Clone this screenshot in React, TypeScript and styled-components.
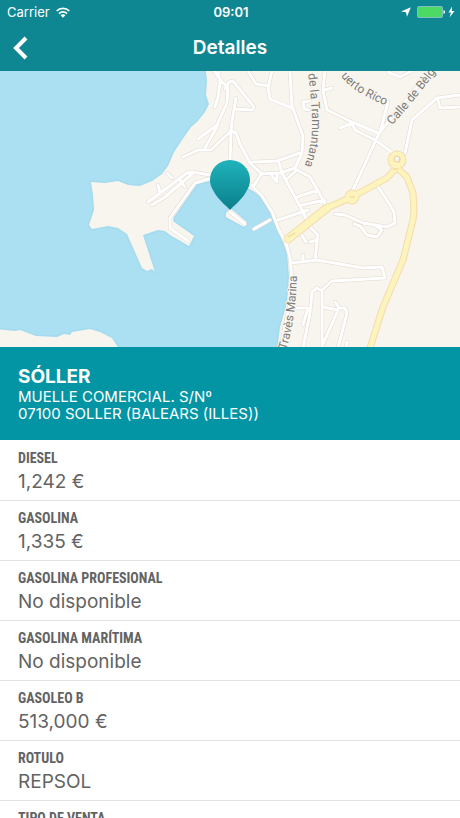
import React from 'react';
import styled, { createGlobalStyle } from 'styled-components';

const GlobalStyle = createGlobalStyle`
  *, *::before, *::after { box-sizing: border-box; }
  body { margin: 0; background: #fff; font-family: Inter, "Liberation Sans", sans-serif; }
`;

const Screen = styled.main`
  height: 100vh;
  overflow: hidden;
  display: flex;
  flex-direction: column;
`;

const Header = styled.header`
  flex: none;
  background: #0f8793;
  color: #fff;
`;

const StatusBar = styled.div`
  display: grid;
  grid-template-columns: 1fr auto 1fr;
  align-items: center;
  height: 24px;
  padding: 0 5px 0 7px;
  font-size: 13px;
`;

const StatusGroup = styled.div<{ $end?: boolean }>`
  display: flex;
  align-items: center;
  gap: 6px;
  justify-content: ${(p) => (p.$end ? 'flex-end' : 'flex-start')};
`;

const Clock = styled.time`
  font-weight: 600;
`;

const NavBar = styled.div`
  display: grid;
  grid-template-columns: 56px 1fr 56px;
  align-items: center;
  height: 47px;
`;

const BackButton = styled.button`
  display: flex;
  align-items: center;
  height: 44px;
  padding: 0 0 0 12px;
  border: 0;
  background: none;
  color: inherit;
  cursor: pointer;
`;

const Title = styled.h1`
  margin: 0;
  text-align: center;
  font-size: 19px;
  font-weight: 600;
`;

const MapView = styled.svg`
  flex: none;
  display: block;
  width: 100%;
  height: 276px;
  background: #abe0f3;
`;

const Roads = styled.g<{ $color: string; $width: number }>`
  fill: none;
  stroke: ${(p) => p.$color};
  stroke-width: ${(p) => p.$width}px;
  stroke-linecap: round;
  stroke-linejoin: round;
`;

const StreetName = styled.text`
  font-family: Roboto, "Liberation Sans", sans-serif;
  font-size: 12px;
  fill: #7d7b79;
  stroke: #f9f6f0;
  stroke-width: 2px;
  paint-order: stroke;
`;

const Station = styled.section`
  flex: none;
  padding: 19px 18px 18px;
  background: #0395a4;
  color: #fff;
`;

const StationName = styled.h2`
  margin: 0;
  font-size: 19px;
  line-height: 22px;
  font-weight: 700;
`;

const Address = styled.address`
  font-size: 15px;
  line-height: 17px;
  font-weight: 400;
  font-style: normal;
`;

const Details = styled.dl`
  flex: 1;
  min-height: 0;
  overflow-y: auto;
  scrollbar-width: none;
  margin: 0;
  padding-top: 1px;
`;

const Row = styled.div`
  display: flex;
  flex-direction: column;
  gap: 2px;
  padding: 8px 18px 6px;
  border-bottom: 1px solid #e2e2e2;
  color: #636363;
`;

const Label = styled.dt`
  font-family: "Roboto Condensed", Roboto, sans-serif;
  font-size: 14px;
  line-height: 18px;
  font-weight: 700;
`;

const Value = styled.dd`
  margin: 0;
  font-size: 19px;
  line-height: 25px;
`;

const streets = [
  'M218 71 220 83 218 97 215 107',
  'M214 71 222 82 228 87 227 103 217 125 198 139',
  'M218 125 205 148',
  'M183 157 198 150 211 150 231 131',
  'M225 89 229 82 233 81 254 107 252 110 235 109',
  'M236 98 232 121 231 131 230 162',
  'M231 131 236 133 240 144 250 163 262 174 280 173 295 168 302 153 303 136 292 106 290 71',
  'M272 71 268 88 270 99 292 108',
  'M248 71 256 84 269 86',
  'M252 162 277 161 300 153',
  'M278 160 282 173 302 210 310 227 318 235 317 242 315 260',
  'M297 170 310 177 327 207',
  'M297 197 318 190 M288 178 297 170 M302 205 325 200',
  'M262 173 253 187 M272 176 277 182 277 175',
  'M325 71 323 90 327 110 352 122 378 133 M325 90 332 88',
  'M340 128 352 123 355 130 375 140 393 153',
  'M388 102 380 132 375 142 353 190',
  'M380 132 430 71',
  'M405 153 412 120 437 98 460 95 M438 100 440 108 460 107',
  'M388 72 400 77 412 71',
  'M310 101 303 102 304 109 309 110',
  'M377 185 390 205 394 212 395 223 387 227 363 223 345 215 335 214',
  'M354 224 360 226 367 235 377 237 382 230 376 226',
  'M210 175 192 172 187 173 148 202',
  'M152 205 165 197 192 174 M167 173 172 178 M158 185 160 192 M180 180 185 187',
  'M188 241 170 228 170 218 195 183 208 179 230 178 250 184 262 196 272 212 279 230 286 243 290 258 292 280 291 300 285 325 281 348',
  'M278 220 308 210 M254 229 270 220 M230 212 245 224',
  'M291 263 317 260 363 268 382 267 385 278 332 281 322 290 322 348',
  'M322 291 317 288 312 292 310 313 303 348',
  'M310 242 317 240 M302 235 306 242 M303 255 303 262',
  'M297 308 308 308 303 325',
  'M323 307 338 310 323 344 M335 302 339 308 345 308 347 313 338 348 M347 342 346 348',
].join(' ');

const avenue = 'M396 168 387 178 352 197 327 208 288 239';
const mainRoad = 'M396 162 397 168 407 177 413 193 414 210 413 220 403 260 383 307 370 348';

const rows = [
  ['DIESEL', '1,242 €'],
  ['GASOLINA', '1,335 €'],
  ['GASOLINA PROFESIONAL', 'No disponible'],
  ['GASOLINA MARÍTIMA', 'No disponible'],
  ['GASOLEO B', '513,000 €'],
  ['ROTULO', 'REPSOL'],
  ['TIPO DE VENTA', 'Público'],
];

function WifiIcon() {
  return (
    <svg width="14" height="11" viewBox="0 0 14 11" fill="none" stroke="#fff" strokeWidth="1.7" aria-hidden="true">
      <path d="M.7 4a8.9 8.9 0 0 1 12.6 0M3 6.6a5.7 5.7 0 0 1 8 0" />
      <path d="M7 7.2c1 0 1.8.4 2.4 1L7 10.800 4.600 8.200c.6-.6 1.400-1 2.400-1z" fill="#fff" stroke="none" />
    </svg>
  );
}

function LocationIcon() {
  return (
    <svg width="10" height="10" viewBox="0 0 10 10" fill="#fff" aria-hidden="true">
      <path d="M9.800.2 6 9.800 5 5.200 0 4.500z" />
    </svg>
  );
}

function BatteryIcon() {
  return (
    <svg width="38" height="12" viewBox="0 0 38 12" aria-hidden="true">
      <rect x=".5" y=".5" width="25" height="11" rx="1.500" fill="#4cd964" stroke="#7fbfc4" />
      <path d="M26.500 4c1 .2 1.500 1 1.500 2s-.5 1.800-1.500 2z" fill="#fff" />
      <path d="M35 .5 31.500 6.600h2.500L32.600 11.500 37.500 5h-2.700z" fill="#fff" />
    </svg>
  );
}

function StationMap() {
  return (
    <MapView viewBox="0 71 460 276" preserveAspectRatio="xMidYMid slice" role="img" aria-label="Mapa de Sóller">
      <defs>
        <linearGradient id="pin" x1="0" y1="0" x2="0" y2="1">
          <stop offset="0" stopColor="#20b3bb" />
          <stop offset="1" stopColor="#0a7f8b" />
        </linearGradient>
        <path id="tramuntana" d="M308 74Q311 95 312 120T303 170" />
        <path id="rico" d="M341 76Q354 94 390 107" />
        <path id="belgica" d="M392 125Q408 109 438 69" />
        <path id="marina" d="M286 350Q296 320 297 272" />
      </defs>
      <g fill="#f8f5ee" stroke="#9dd5ec" strokeOpacity=".5" strokeWidth="3" paintOrder="stroke" strokeLinejoin="round">
        <path d="M205 66 207 80 206 95 209 104 205 112 197 122 191 127 184 137 174 152 168 166 162 174 152 181 140 186 128 185 118 181 105 183 91 182 93 195 94 210 89 225 92 229 108 226 118 228 127 234 142 268 147 271 152 269 155 272 143 235 158 230 165 231 170 235 189 246 194 236 173 221 174 217 197 184 210 181 248 188 259 195 268 208 274 219 281 237 287 253 289 277 287 303 280 327 277 352H464V66Z" />
        <path d="M-4 329 15 331 20 330 36 336 57 337 64 334 70 335 72 332 90 329 100 332 112 338 121 352H-4Z" />
        <path d="M226 213 230 208 247 222 244 227 226 217Z" />
      </g>
      <Roads $color="#e0d8d0" $width={4}>
        <path d={streets} />
      </Roads>
      <Roads $color="#fff" $width={3}>
        <path d={streets} />
      </Roads>
      <Roads $color="#f2dcae" $width={7}>
        <path d={mainRoad} />
        <path d={avenue} />
        <path d="M327 208 288 239" strokeWidth="9" />
        <circle cx="397" cy="160" r="6" />
        <circle cx="352" cy="197" r="4" />
      </Roads>
      <Roads $color="#fdf3bc" $width={5}>
        <path d={mainRoad} />
        <path d={avenue} />
        <path d="M327 208 288 239" strokeWidth="7" />
        <circle cx="397" cy="160" r="6" />
        <circle cx="352" cy="197" r="4" />
      </Roads>
      <Roads $color="#ecd199" $width={1}>
        <circle cx="397" cy="159" r="3" fill="#f8f5ee" />
        <path d="M350 197H354M393 169H398M288 237 295 233" />
      </Roads>
      <StreetName>
        <textPath href="#tramuntana">de la Tramuntana</textPath>
      </StreetName>
      <StreetName>
        <textPath href="#rico">uerto Rico</textPath>
      </StreetName>
      <StreetName>
        <textPath href="#belgica">Calle de Bèlg</textPath>
      </StreetName>
      <StreetName>
        <textPath href="#marina">Travès Marina</textPath>
      </StreetName>
      <path
        d="M230 210C227 206 219 201 214 192C211 187 210 184 210 180A20 20 0 0 1 250 180C250 184 249 187 246 192C241 201 233 206 230 210Z"
        fill="url(#pin)"
      />
    </MapView>
  );
}

export default function App() {
  return (
    <Screen>
      <GlobalStyle />
      <Header>
        <StatusBar>
          <StatusGroup>
            Carrier
            <WifiIcon />
          </StatusGroup>
          <Clock>09:01</Clock>
          <StatusGroup $end>
            <LocationIcon />
            <BatteryIcon />
          </StatusGroup>
        </StatusBar>
        <NavBar>
          <BackButton aria-label="Volver">
            <svg width="16" height="24" viewBox="0 0 16 24" fill="none" stroke="#fff" strokeWidth="4">
              <path d="M14 2 4 12l10 10" />
            </svg>
          </BackButton>
          <Title>Detalles</Title>
        </NavBar>
      </Header>
      <StationMap />
      <Station>
        <StationName>SÓLLER</StationName>
        <Address>
          MUELLE COMERCIAL. S/Nº
          <br />
          07100 SOLLER (BALEARS (ILLES))
        </Address>
      </Station>
      <Details>
        {rows.map(([label, value]) => (
          <Row key={label}>
            <Label>{label}</Label>
            <Value>{value}</Value>
          </Row>
        ))}
      </Details>
    </Screen>
  );
}
